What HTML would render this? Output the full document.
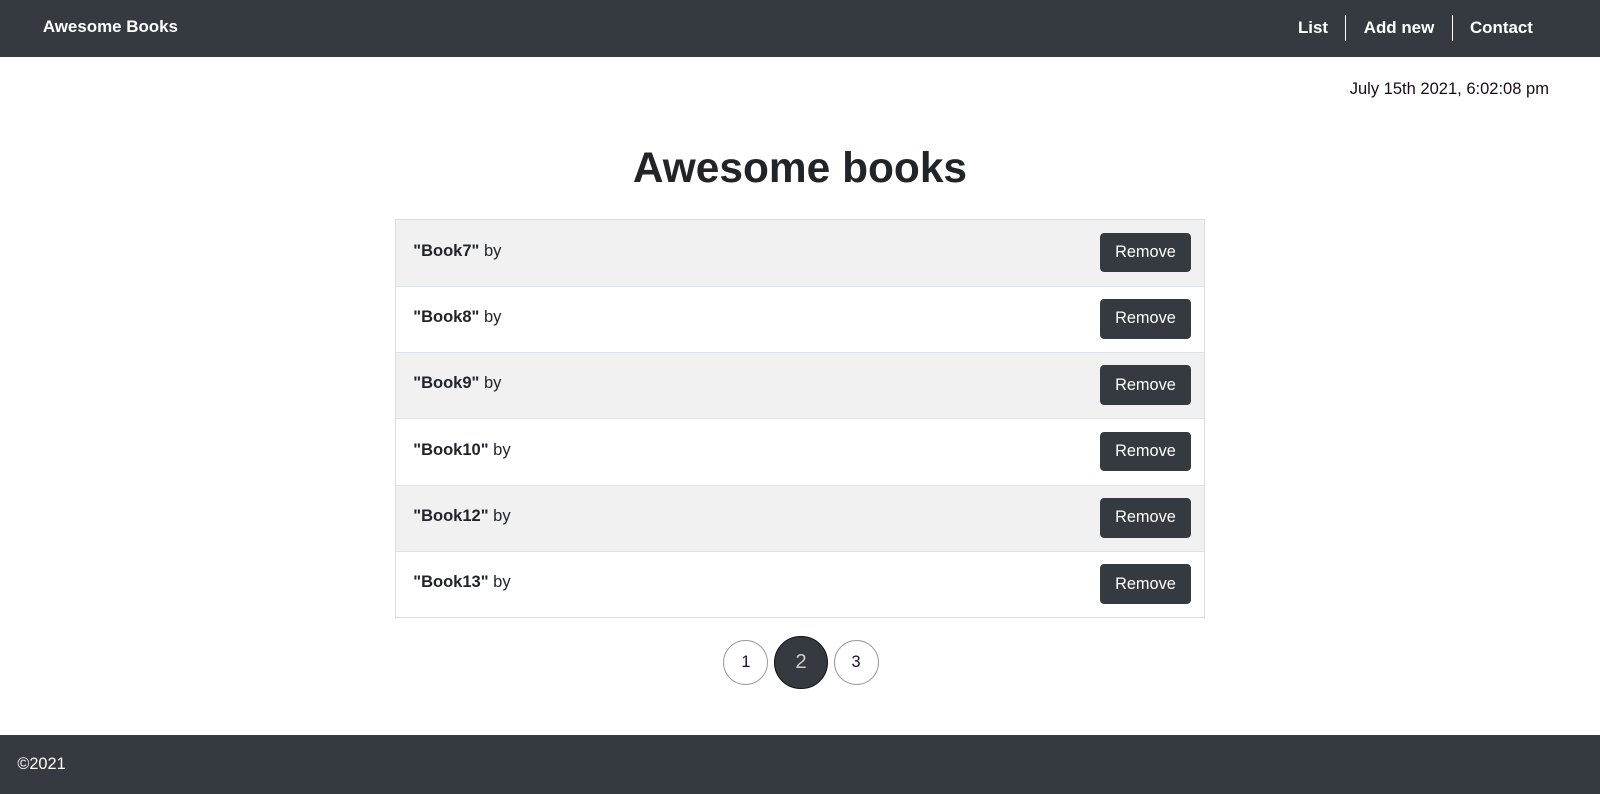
<!DOCTYPE html>
<html><head><meta charset="utf-8"><style>
*{box-sizing:border-box;margin:0;padding:0}
html,body{width:1600px;height:794px;overflow:hidden;background:#fff}
body{font-family:"Liberation Sans",Arial,sans-serif;color:#212529}
.w{position:relative;width:1568px;height:778px;zoom:1.020408}
.nav{position:absolute;top:0;left:0;width:1568px;height:56px;background:#343a40;color:#fff;font-weight:bold;font-size:16.6px}
.brand{position:absolute;left:42px;top:17px}
.links{position:absolute;top:15px;left:1255px;display:flex}
.links span{padding:0 17px;border-left:1px solid #fff;line-height:25px}
.links span:first-child{border-left:none}
.date{position:absolute;right:50px;top:77px;font-size:16.2px;color:#1a0a1a}
h1{position:absolute;top:141px;left:0;width:1568px;text-align:center;font-size:41.6px;font-weight:bold;color:#212529}
.list{position:absolute;left:387px;top:215px;width:794px;border:1px solid #dcdcdc}
.row{height:65px;position:relative;border-top:1px solid #dee2e6;font-size:16.2px}
.row:first-child{border-top:none;height:64px}
.row:nth-child(odd){background:#f1f1f1}
.row .t{position:absolute;left:17px;top:20px}
.row button{position:absolute;right:13px;top:12px;width:89px;height:39px;background:#343a40;color:#fff;border:none;border-radius:4px;font-family:inherit;font-size:16px}
.pg{position:absolute;top:623px;left:709px;display:flex;align-items:center}
.c{width:44px;height:44px;border:1px solid #999;border-radius:50%;display:flex;align-items:center;justify-content:center;font-size:16px;color:#1a0a3a;margin-right:6px}
.c.a{width:52px;height:52px;background:#343a40;border:1px solid #111;color:#ccc;font-size:20px}
.foot{position:absolute;top:720px;left:0;width:1568px;height:58px;background:#343a40;color:#fff;font-size:16px;padding:20px 17px}
</style></head><body><div class="w">
<div class="nav"><div class="brand">Awesome Books</div><div class="links"><span>List</span><span>Add new</span><span>Contact</span></div></div>
<div class="date">July 15th 2021, 6:02:08 pm</div>
<h1>Awesome books</h1>
<div class="list">
<div class="row"><div class="t"><b>"Book7"</b> by</div><button>Remove</button></div>
<div class="row"><div class="t"><b>"Book8"</b> by</div><button>Remove</button></div>
<div class="row"><div class="t"><b>"Book9"</b> by</div><button>Remove</button></div>
<div class="row"><div class="t"><b>"Book10"</b> by</div><button>Remove</button></div>
<div class="row"><div class="t"><b>"Book12"</b> by</div><button>Remove</button></div>
<div class="row"><div class="t"><b>"Book13"</b> by</div><button>Remove</button></div>
</div>
<div class="pg"><div class="c">1</div><div class="c a">2</div><div class="c">3</div></div>
<div class="foot">©2021</div>
</div></body></html>
